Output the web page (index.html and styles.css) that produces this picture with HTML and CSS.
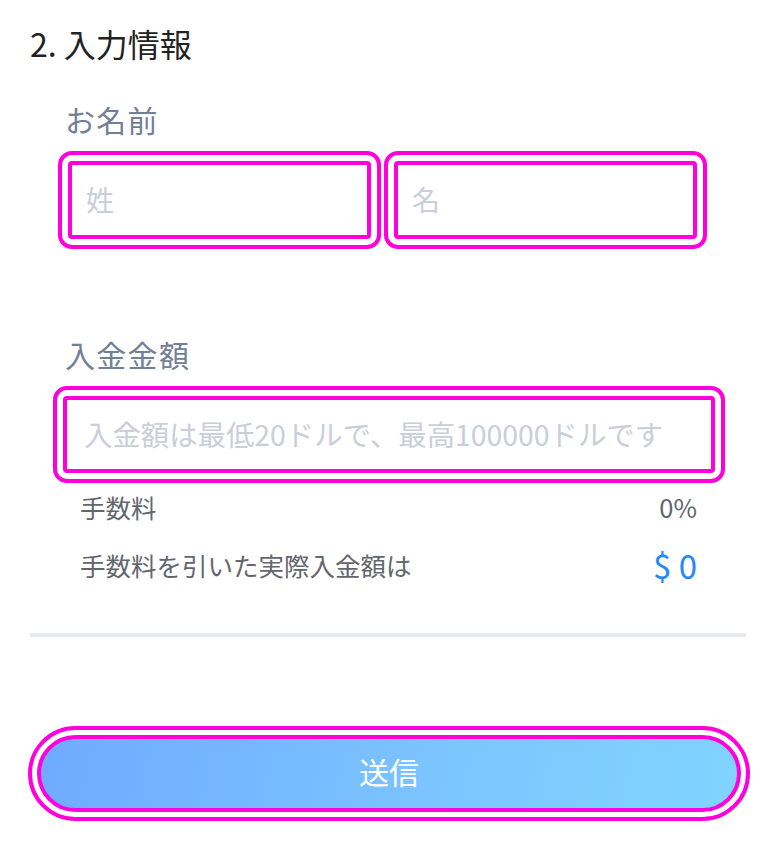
FILE: index.html
```html
<!DOCTYPE html>
<html lang="ja">

<head>
    <meta charset="UTF-8">
    <meta name="viewport" content="width=device-width, initial-scale=1.0">
    <title>入力情報</title>
    <link rel="stylesheet" href="styles.css">
</head>

<body>
    <div class="page">
        <h2 class="step-title">2. 入力情報</h2>

        <div class="field-label">お名前</div>
        <div class="name-row">
            <input type="text" class="text-input name-input" placeholder="姓">
            <input type="text" class="text-input name-input" placeholder="名">
        </div>

        <div class="field-label amount-label">入金金額</div>
        <input type="text" class="text-input amount-input" placeholder="入金額は最低20ドルで、最高100000ドルです">

        <div class="fee-row">
            <span>手数料</span>
            <span>0%</span>
        </div>
        <div class="fee-row total-row">
            <span>手数料を引いた実際入金額は</span>
            <span class="total-value">$ 0</span>
        </div>

        <div class="divider"></div>

        <button class="submit-btn">送信</button>
    </div>
</body>

</html>
```

FILE: styles.css
```css
body {
    margin: 0;
    background: #fff;
    font-family: "Noto Sans CJK JP", "Noto Sans", sans-serif;
}

.page {
    padding: 0 32px 40px 30px;
}

.step-title {
    margin: 23px 0 0 0;
    font-size: 32px;
    line-height: 40px;
    font-weight: 400;
    color: #222;
}

.field-label {
    margin: 38px 0 0 35px;
    font-size: 30px;
    line-height: 36px;
    letter-spacing: 1.3px;
    color: #718096;
}

.amount-label {
    margin-top: 97px;
}

.text-input {
    box-sizing: border-box;
    height: 78px;
    border: 4px solid #ff00dc;
    border-radius: 4px;
    outline: 4px solid #ff00dc;
    outline-offset: 6px;
    font-family: inherit;
    font-size: 28px;
    color: #333;
    background: #fff;
}

.text-input::placeholder {
    color: #c9ced9;
}

.name-row {
    display: flex;
    gap: 23px;
    margin: 24px 49px 0 38px;
}

.name-input {
    flex: 1;
    min-width: 0;
    padding: 0 14px 3px;
}

.amount-input {
    display: block;
    width: calc(100% - 64px);
    height: 77px;
    margin: 24px 0 0 33px;
    padding: 0 17px 3px;
    font-size: 28.4px;
}

.fee-row {
    display: flex;
    justify-content: space-between;
    align-items: center;
    margin: 19px 49px 0 50px;
    font-size: 25.5px;
    line-height: 30px;
    color: #62666d;
}

.total-row {
    margin-top: 23px;
    height: 40px;
}

.total-value {
    font-size: 33px;
    color: #2489f4;
}

.divider {
    height: 4px;
    margin-top: 48px;
    background: #e8e8ef;
}

.submit-btn {
    display: block;
    box-sizing: border-box;
    width: calc(100% - 12px);
    height: 77px;
    margin: 98px 0 0 7px;
    padding: 0 0 6px;
    border: 4px solid #ff00dc;
    border-radius: 40px;
    outline: 4px solid #ff00dc;
    outline-offset: 5px;
    background: linear-gradient(100deg, #6faaff 0%, #7cc6ff 60%, #80d4ff 100%);
    font-family: inherit;
    font-size: 30px;
    color: #fff;
    cursor: pointer;
}
```
